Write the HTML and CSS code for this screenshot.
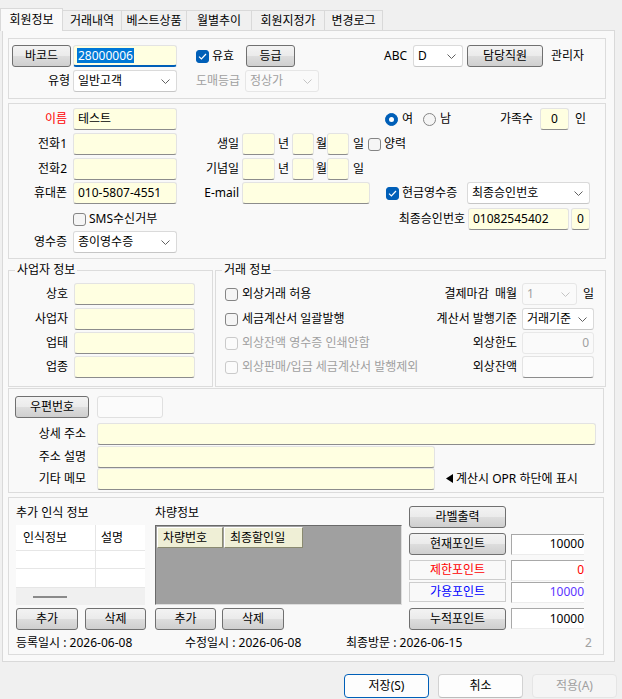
FILE: index.html
```html
<!DOCTYPE html>
<html lang="ko">
<head>
<meta charset="utf-8">
<title>회원정보</title>
<link rel="stylesheet" href="styles.css">
</head>
<body>
<div class="tabs">
  <div class="tab t1 active">회원정보</div>
  <div class="tab t2">거래내역</div>
  <div class="tab t3">베스트상품</div>
  <div class="tab t4">월별추이</div>
  <div class="tab t5">회원지정가</div>
  <div class="tab t6">변경로그</div>
</div>

<div class="panel">
  <!-- group 1 -->
  <div class="grp g1">
    <div class="row">
      <div class="btn w59">바코드</div>
      <div class="inp focus w104 ml2"><span class="hl">28000006</span></div>
      <div class="cb w50 ml19"><span class="chk on"><svg width="9" height="7" viewBox="0 0 9 7"><path d="M1 3.6 L3.4 6 L8 1" fill="none" stroke="#fff" stroke-width="1.2"/></svg></span><span class="ml3">유효</span></div>
      <div class="btn w49">등급</div>
      <span class="lb left w29 ml89">ABC</span>
      <div class="sel w50"><span>D</span><svg class="chev" width="9" height="5" viewBox="0 0 9 5"><path d="M0.5 0.5 L4.5 4.5 L8.5 0.5" fill="none" stroke="#606060"/></svg></div>
      <div class="btn w76 ml4">담당직원</div>
      <span class="ml8">관리자</span>
    </div>
    <div class="row mt3">
      <span class="lb w58">유형</span>
      <div class="sel w104 ml3"><span>일반고객</span><svg class="chev" width="9" height="5" viewBox="0 0 9 5"><path d="M0.5 0.5 L4.5 4.5 L8.5 0.5" fill="none" stroke="#606060"/></svg></div>
      <span class="lb left gray w49 ml19">도매등급</span>
      <div class="sel dis w74"><span>정상가</span><svg class="chev" width="9" height="5" viewBox="0 0 9 5"><path d="M0.5 0.5 L4.5 4.5 L8.5 0.5" fill="none" stroke="#c4c4c4"/></svg></div>
    </div>
  </div>

  <!-- group 2 -->
  <div class="grp g2">
    <div class="row h24">
      <span class="lb w58 red">이름</span>
      <div class="inp w104 ml6">테스트</div>
      <div class="cb w38 ml208"><span class="rad on"><span class="dot"></span></span><span class="ml4">여</span></div>
      <div class="cb w38"><span class="rad"></span><span class="ml4">남</span></div>
      <span class="lb left w40 ml39">가족수</span>
      <div class="inp center w29">0</div>
      <span class="ml6">인</span>
    </div>
    <div class="row mt2">
      <span class="lb w58">전화1</span>
      <div class="inp w104 ml6"></div>
      <span class="lb w62">생일</span>
      <div class="inp w33 ml3"></div>
      <span class="unit w17 pl3">년</span>
      <div class="inp w22"></div>
      <span class="unit w16 pl2">월</span>
      <div class="inp w22"></div>
      <span class="unit w19 pl4">일</span>
      <div class="cb"><span class="chk"></span><span class="ml3">양력</span></div>
    </div>
    <div class="row mt3">
      <span class="lb w58">전화2</span>
      <div class="inp w104 ml6"></div>
      <span class="lb w62">기념일</span>
      <div class="inp w33 ml3"></div>
      <span class="unit w17 pl3">년</span>
      <div class="inp w22"></div>
      <span class="unit w16 pl2">월</span>
      <div class="inp w22"></div>
      <span class="unit w19 pl4">일</span>
    </div>
    <div class="row mt2">
      <span class="lb w58">휴대폰</span>
      <div class="inp w104 ml6">010-5807-4551</div>
      <span class="lb w62">E-mail</span>
      <div class="inp w128 ml3"></div>
      <div class="cb w81 ml16"><span class="chk on"><svg width="9" height="7" viewBox="0 0 9 7"><path d="M1 3.6 L3.4 6 L8 1" fill="none" stroke="#fff" stroke-width="1.2"/></svg></span><span class="ml3">현금영수증</span></div>
      <div class="sel w123"><span>최종승인번호</span><svg class="chev" width="9" height="5" viewBox="0 0 9 5"><path d="M0.5 0.5 L4.5 4.5 L8.5 0.5" fill="none" stroke="#606060"/></svg></div>
    </div>
    <div class="row h24 mt3">
      <div class="sms w383"><div class="cb"><span class="chk"></span><span class="ml3">SMS수신거부</span></div></div>
      <span class="lb w73">최종승인번호</span>
      <div class="inp w101 ml3">01082545402</div>
      <div class="inp center w19 ml2">0</div>
    </div>
    <div class="row">
      <span class="lb w58">영수증</span>
      <div class="sel w104 ml6"><span>종이영수증</span><svg class="chev" width="9" height="5" viewBox="0 0 9 5"><path d="M0.5 0.5 L4.5 4.5 L8.5 0.5" fill="none" stroke="#606060"/></svg></div>
    </div>
  </div>

  <!-- groups 3 / 4 -->
  <div class="pair">
    <fieldset class="fs g3">
      <legend>사업자 정보</legend>
      <div class="row"><span class="lb w59">상호</span><div class="inp w121 ml6"></div></div>
      <div class="row mt3"><span class="lb w59">사업자</span><div class="inp w121 ml6"></div></div>
      <div class="row mt2"><span class="lb w59">업태</span><div class="inp w121 ml6"></div></div>
      <div class="row mt2"><span class="lb w59">업종</span><div class="inp w121 ml6"></div></div>
    </fieldset>
    <fieldset class="fs g4">
      <legend>거래 정보</legend>
      <div class="row">
        <div class="cb w185"><span class="chk"></span><span class="ml4">외상거래 허용</span></div>
        <span class="lb w107">결제마감&nbsp;&nbsp;매월</span>
        <div class="sel dis w55 ml5"><span>1</span><svg class="chev" width="9" height="5" viewBox="0 0 9 5"><path d="M0.5 0.5 L4.5 4.5 L8.5 0.5" fill="none" stroke="#c4c4c4"/></svg></div>
        <span class="ml6">일</span>
      </div>
      <div class="row mt3">
        <div class="cb w185"><span class="chk"></span><span class="ml4">세금계산서 일괄발행</span></div>
        <span class="lb w107">계산서 발행기준</span>
        <div class="sel w72 ml5"><span>거래기준</span><svg class="chev" width="9" height="5" viewBox="0 0 9 5"><path d="M0.5 0.5 L4.5 4.5 L8.5 0.5" fill="none" stroke="#606060"/></svg></div>
      </div>
      <div class="row mt2">
        <div class="cb w185"><span class="chk dis"></span><span class="ml4 gray">외상잔액 영수증 인쇄안함</span></div>
        <span class="lb w107">외상한도</span>
        <div class="inp dis right w72 ml5">0</div>
      </div>
      <div class="row mt2">
        <div class="cb w185"><span class="chk dis"></span><span class="ml4 gray">외상판매/입금 세금계산서 발행제외</span></div>
        <span class="lb w107">외상잔액</span>
        <div class="inp white w72 ml5"></div>
      </div>
    </fieldset>
  </div>

  <!-- group 5 -->
  <div class="grp g5">
    <div class="row h25">
      <div class="btn w74 h25">우편번호</div>
      <div class="inp ro w66 ml8"></div>
    </div>
    <div class="row h21 mt4">
      <span class="lb w71">상세 주소</span>
      <div class="inp h21 w499 ml11"></div>
    </div>
    <div class="row h21 mt2">
      <span class="lb w71">주소 설명</span>
      <div class="inp h21 w338 ml11"></div>
    </div>
    <div class="row h21 mt1">
      <span class="lb w71">기타 메모</span>
      <div class="inp h21 w338 ml11"></div>
      <span class="note ml11"><svg width="7" height="9" viewBox="0 0 7 9"><path d="M7 0 L0 4.5 L7 9 Z" fill="#000"/></svg><span class="ml3">계산시 OPR 하단에 표시</span></span>
    </div>
  </div>

  <!-- group 6 -->
  <div class="grp g6">
    <div class="cols">
      <div class="col w130">
        <div class="ttl">추가 인식 정보</div>
        <div class="lst mt5">
          <div class="lrow hdr"><span class="c1">인식정보</span><span class="c2">설명</span></div>
          <div class="lrow r1"><span class="c1"></span><span class="c2"></span></div>
          <div class="lrow r2"><span class="c1"></span><span class="c2"></span></div>
          <div class="lsb"><span class="thumb"></span></div>
        </div>
        <div class="row h21 mt3">
          <div class="btn h21 w62">추가</div>
          <div class="btn h21 w61 ml7">삭제</div>
        </div>
      </div>
      <div class="col w247 ml9">
        <div class="ttl">차량정보</div>
        <div class="vg mt5">
          <div class="vh w66">차량번호</div>
          <div class="vh w79 ml1">최종할인일</div>
        </div>
        <div class="row h21 mt3">
          <div class="btn h21 w61">추가</div>
          <div class="btn h21 w62 ml6">삭제</div>
        </div>
      </div>
      <div class="col ml7">
        <div class="btn h23 w97">라벨출력</div>
        <div class="row h24 mt4">
          <div class="btn h24 w97">현재포인트</div>
          <div class="val w73 ml5">10000</div>
        </div>
        <div class="row h20 mt4">
          <div class="pbox w97 red">제한포인트</div>
          <div class="val h20 w73 ml5 red">0</div>
        </div>
        <div class="row h20 mt2">
          <div class="pbox w97 blue">가용포인트</div>
          <div class="val h20 w73 ml5 violet">10000</div>
        </div>
        <div class="row h23 mt5">
          <div class="btn h23 w97">누적포인트</div>
          <div class="val w73 ml5">10000</div>
        </div>
      </div>
    </div>
    <div class="foot">
      <span class="w169">등록일시 : 2026-06-08</span>
      <span class="w161">수정일시 : 2026-06-08</span>
      <span class="w239">최종방문 : 2026-06-15</span>
      <span class="gray">2</span>
    </div>
  </div>
</div>

<div class="actions">
  <div class="abtn pri">저장(S)</div>
  <div class="abtn">취소</div>
  <div class="abtn dis">적용(A)</div>
</div>
</body>
</html>
```

FILE: styles.css
```css
* { box-sizing: border-box; }
html, body { margin: 0; padding: 0; }
body {
  width: 622px; height: 699px; overflow: hidden;
  background: #f0f0f0;
  font-family: "Noto Sans", "Noto Sans CJK KR", sans-serif;
  font-size: 12px; line-height: 14px; color: #000;
}

/* tabs */
.tabs { display: flex; align-items: flex-end; height: 30px; }
.tab {
  height: 20px; border: 1px solid #d9d9d9; border-bottom: none;
  margin-left: -1px; background: #f0f0f0;
  display: flex; align-items: center; justify-content: center;
  white-space: nowrap; flex: none;
}
.tab.active {
  height: 23px; margin-left: 0; margin-bottom: -1px;
  background: #f9f9f9; position: relative; z-index: 2;
}
.t1 { width: 63px; } .t2 { width: 60px; } .t3 { width: 66px; }
.t4 { width: 66px; } .t5 { width: 74px; } .t6 { width: 59px; }

.panel {
  margin-left: 2px; width: 613px; height: 632px;
  border: 1px solid #d9d9d9; background: #f9f9f9;
  padding: 7px 0 0 5px;
}

/* generic */
.row { display: flex; align-items: center; height: 22px; flex: none; }
.h20 { height: 20px; } .h21 { height: 21px; } .h23 { height: 23px; }
.h24 { height: 24px; } .h25 { height: 25px; }
.lb { flex: none; text-align: right; white-space: nowrap; }
.lb.left { text-align: left; }
.unit { flex: none; white-space: nowrap; }
.red { color: #ff0000; }
.blue { color: #0000ff; }
.violet { color: #5b35ff; }
.gray { color: #a0a0a0; }

.btn {
  flex: none; height: 22px;
  border: 1px solid #707070; border-radius: 3px;
  background: linear-gradient(#f3f3f3 0%, #ebebeb 48%, #dddddd 52%, #cfcfcf 100%);
  display: flex; align-items: center; justify-content: center;
  white-space: nowrap;
}
.inp {
  flex: none; height: 22px;
  background: #ffffe1;
  border: 1px solid #e3e3e3; border-bottom-color: #8c8c8c;
  border-radius: 3px; padding: 0 4px;
  display: flex; align-items: center;
  white-space: nowrap; overflow: hidden;
}
.inp.focus { border-bottom: 2px solid #005fb8; padding-left: 3px; }
.inp.center { justify-content: center; padding: 0; }
.inp.right { justify-content: flex-end; }
.inp.dis { background: #fafafa; border-color: #e8e8e8; color: #a0a0a0; }
.inp.white { background: #fcfcfc; border-color: #e3e3e3; border-bottom-color: #8c8c8c; }
.inp.ro { background: #fbfbfb; border-color: #e0e0e0; }
.hl { background: #0078d7; color: #fff; line-height: 15px; padding: 0 1px; }

.sel {
  flex: none; height: 22px; background: #fff;
  border: 1px solid #dadada; border-bottom-color: #c6c6c6;
  border-radius: 3px; padding: 0 6px 0 4px;
  display: flex; align-items: center; justify-content: space-between;
  white-space: nowrap;
}
.sel.dis { background: #fafafa; border-color: #e6e6e6; color: #a0a0a0; }
.chev { flex: none; }

.cb { display: flex; align-items: center; flex: none; white-space: nowrap; }
.chk {
  width: 13px; height: 13px; flex: none;
  border: 1px solid #858585; border-radius: 3px; background: #f5f5f5;
  display: flex; align-items: center; justify-content: center;
}
.chk.on { background: #005fb8; border-color: #005fb8; }
.chk.dis { border-color: #cacaca; background: #fbfbfb; }
.rad {
  width: 13px; height: 13px; flex: none; border-radius: 50%;
  border: 1px solid #858585; background: #f5f5f5;
  display: flex; align-items: center; justify-content: center;
}
.rad.on { background: #005fb8; border-color: #005fb8; }
.dot { width: 5px; height: 5px; border-radius: 50%; background: #fff; }

/* sizes */
.w17{width:17px}.w19{width:19px}.w22{width:22px}.w29{width:29px}.w33{width:33px}
.w38{width:38px}.w40{width:40px}.w49{width:49px}.w50{width:50px}.w55{width:55px}
.w58{width:58px}.w59{width:59px}.w61{width:61px}.w62{width:62px}.w66{width:66px}
.w71{width:71px}.w72{width:72px}.w73{width:73px}.w74{width:74px}.w76{width:76px}
.w79{width:79px}.w81{width:81px}.w97{width:97px}.w101{width:101px}.w104{width:104px}
.w107{width:107px}.w121{width:121px}.w123{width:123px}.w128{width:128px}.w130{width:130px}
.w161{width:161px}.w169{width:169px}.w185{width:185px}.w239{width:239px}.w247{width:247px}
.w338{width:338px}.w383{width:383px}.w499{width:499px}
.ml1{margin-left:1px}.ml2{margin-left:2px}.ml3{margin-left:3px}.ml4{margin-left:4px}
.ml5{margin-left:5px}.ml6{margin-left:6px}.ml7{margin-left:7px}.ml8{margin-left:8px}
.ml9{margin-left:9px}.ml11{margin-left:11px}.ml16{margin-left:16px}.ml19{margin-left:19px}
.ml39{margin-left:39px}.ml89{margin-left:89px}.ml208{margin-left:208px}
.mt1{margin-top:1px}.mt2{margin-top:2px}.mt3{margin-top:3px}.mt4{margin-top:4px}.mt5{margin-top:5px}
.pl2{padding-left:2px}.pl3{padding-left:3px}.pl4{padding-left:4px}

/* groups */
.grp { border: 1px solid #dcdcdc; width: 598px; }
.g1 { height: 61px; padding: 6px 0 0 3px; }
.g2 { height: 156px; margin-top: 4px; padding: 3px 0 0 0; }
.sms { flex: none; display: flex; padding-left: 64px; }

.pair { display: flex; margin-top: 3px; }
.fs {
  margin: 0; padding: 5px 0 0 0; min-width: 0;
  border: 1px solid #dcdcdc; height: 125px;
}
.fs legend {
  margin-left: 6px; padding: 0 2px; line-height: 16px; font-size: 12px;
}
.g3 { width: 205px; }
.g4 { width: 391px; margin-left: 2px; }
.g4 .row { padding-left: 9px; }

.g5 { width: 596px; height: 105px; margin-top: 1px; padding: 5px 0 0 6px; }
.note { display: flex; align-items: center; white-space: nowrap; }

.g6 { width: 596px; height: 158px; margin-top: 4px; padding: 8px 0 0 7px; }
.cols { display: flex; height: 125px; }
.col { flex: none; display: flex; flex-direction: column; }
.ttl { height: 14px; line-height: 14px; white-space: nowrap; }

.lst { width: 129px; height: 80px; background: #fff; display: flex; flex-direction: column; }
.lrow { display: flex; flex: none; }
.lrow.hdr { height: 25px; align-items: center; }
.lrow.r1 { height: 18px; border-top: 1px solid #e6e6e6; }
.lrow.r2 { height: 19px; border-top: 1px solid #e6e6e6; }
.c1 { width: 80px; height: 100%; border-right: 1px solid #e6e6e6; padding-left: 7px; display: flex; align-items: center; }
.c2 { flex: 1; padding-left: 5px; display: flex; align-items: center; height: 100%; }
.lsb { height: 18px; background: #f0f0f0; border-top: 1px solid #e6e6e6; display: flex; align-items: center; }
.thumb { width: 34px; height: 2px; margin-left: 17px; background: #8a8a8a; }

.vg {
  width: 247px; height: 80px; background: #a0a0a0;
  border: 1px solid; border-color: #6a6a6a #dedede #dedede #6a6a6a;
  padding: 1px 0 0 1px; display: flex; align-items: flex-start;
}
.vh {
  flex: none; height: 21px; background: #efefd6;
  border: 1px solid; border-color: #ffffff #8a8a70 #8a8a70 #ffffff;
  padding-left: 5px; display: flex; align-items: center; white-space: nowrap;
}

.val {
  flex: none; height: 21px; background: #fff;
  border-top: 1px solid #a8a8a8; border-left: 1px solid #a8a8a8;
  border-bottom: 1px solid #ececec;
  display: flex; align-items: center; justify-content: flex-end;
}
.pbox {
  flex: none; height: 20px; border: 1px solid #cdcdcd; background: #f9f9f9;
  display: flex; align-items: center; justify-content: center; white-space: nowrap;
}

.foot { display: flex; height: 14px; margin-top: 5px; white-space: nowrap; }
.foot span { flex: none; }

/* action buttons */
.actions { display: flex; justify-content: flex-end; gap: 9px; margin-top: 12px; padding-right: 5px; }
.abtn {
  width: 85px; height: 24px; border-radius: 4px;
  background: #fdfdfd; border: 1px solid #d2d2d2; border-bottom-color: #bcbcbc;
  display: flex; align-items: center; justify-content: center; white-space: nowrap;
}
.abtn.pri { border: 1px solid #005fb8; }
.abtn.dis { background: #f5f5f5; border-color: #e5e5e5; color: #a0a0a0; }
```
